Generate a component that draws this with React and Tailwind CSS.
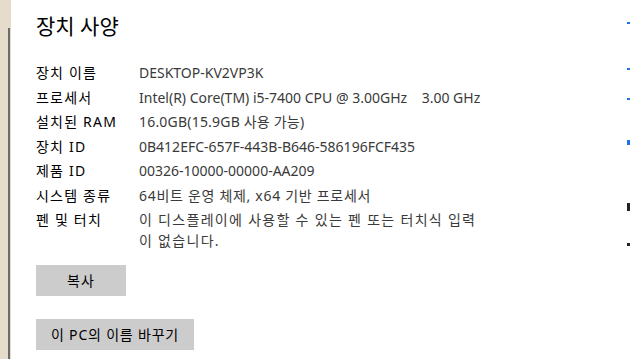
const ROWS = [
  { label: '장치 이름', value: 'DESKTOP-KV2VP3K' },
  { label: '프로세서', value: 'Intel(R) Core(TM) i5-7400 CPU @ 3.00GHz\u00a0\u00a0\u00a0 3.00 GHz' },
  { label: '설치된 RAM', value: '16.0GB(15.9GB 사용 가능)', track: 'tracking-[0.2px]' },
  { label: '장치 ID', value: '0B412EFC-657F-443B-B646-586196FCF435' },
  { label: '제품 ID', value: '00326-10000-00000-AA209' },
  { label: '시스템 종류', value: '64비트 운영 체제, x64 기반 프로세서', track: 'tracking-[0.7px]' },
  { label: '펜 및 터치', value: <>이 디스플레이에 사용할 수 있는 펜 또는 터치식 입력<br />이 없습니다.</>, track: 'tracking-[1.3px]' },
]

export default function App() {
  return (
    <div
      className="w-[631px] h-[359px] overflow-hidden flex bg-white"
      style={{ fontFamily: '"Noto Sans", "Noto Sans CJK KR", sans-serif' }}
    >
      {/* left window edge */}
      <div className="w-[11px] shrink-0 bg-[#e6dccb] flex">
        <div className="w-[8px]" />
        <div className="w-[2px] mt-[28px] bg-[#6b6b6b]" />
      </div>

      {/* content */}
      <div className="flex-1 pl-[25px] pt-[12px]">
        <h1 className="text-[21px] leading-[28px] text-black">장치 사양</h1>

        <div className="mt-[23px] flex flex-col">
          {ROWS.map(r => (
            <div key={r.label} className="flex text-[14px] leading-[20.5px] min-h-[24.5px]">
              <div className="w-[103px] shrink-0 text-black tracking-[1.2px]">{r.label}</div>
              <div className={`whitespace-nowrap text-[#3a3a3a] ${r.track || ''}`}>{r.value}</div>
            </div>
          ))}
        </div>

        <div className="mt-[14px] flex flex-col items-start gap-[23px]">
          <button className="w-[90px] h-[31px] bg-[#cccccc] text-[14px] text-black tracking-[1px]">복사</button>
          <button className="w-[158px] h-[31px] bg-[#cccccc] text-[14px] text-black tracking-[0.8px]">이 PC의 이름 바꾸기</button>
        </div>
      </div>

      {/* clipped right column */}
      <div className="w-[4px] shrink-0 relative">
        <div className="absolute left-[0px] top-[22px] w-[3px] h-[2px] bg-[#1a73e8]" />
        <div className="absolute left-[0px] top-[68px] w-[3px] h-[2px] bg-[#1a73e8]" />
        <div className="absolute left-[0px] top-[98px] w-[3px] h-[2px] bg-[#1a73e8]" />
        <div className="absolute left-[0px] top-[140px] w-[3px] h-[5px] bg-[#1a73e8]" />
        <div className="absolute left-[0px] top-[203px] w-[3px] h-[8px] bg-[#222]" />
        <div className="absolute left-[0px] top-[243px] w-[3px] h-[3px] bg-[#222]" />
      </div>
    </div>
  )
}
